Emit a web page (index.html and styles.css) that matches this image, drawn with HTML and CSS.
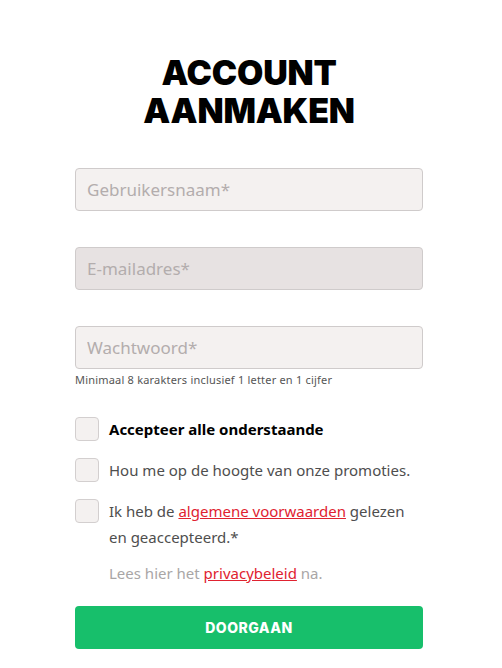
FILE: index.html
```html
<!DOCTYPE html>
<html lang="nl">
<head>
<meta charset="utf-8">
<title>Account aanmaken</title>
<link rel="stylesheet" href="styles.css">
</head>
<body>
<main class="page">
  <h1 class="title">ACCOUNT<br>AANMAKEN</h1>
  <form class="form">
    <div class="field">
      <input class="input" type="text" placeholder="Gebruikersnaam*">
    </div>
    <div class="field">
      <input class="input input-active" type="email" placeholder="E-mailadres*">
    </div>
    <div class="field field-last">
      <input class="input" type="password" placeholder="Wachtwoord*">
      <p class="hint">Minimaal 8 karakters inclusief 1 letter en 1 cijfer</p>
    </div>
    <div class="checks">
      <label class="check">
        <span class="box"></span>
        <span class="check-text strong">Accepteer alle onderstaande</span>
      </label>
      <label class="check">
        <span class="box"></span>
        <span class="check-text">Hou me op de hoogte van onze promoties.</span>
      </label>
      <label class="check">
        <span class="box"></span>
        <span class="check-text">Ik heb de <a class="link" href="#">algemene voorwaarden</a> gelezen<br>en geaccepteerd.*</span>
      </label>
      <p class="privacy">Lees hier het <a class="link" href="#">privacybeleid</a> na.</p>
    </div>
    <button class="submit" type="button">DOORGAAN</button>
  </form>
</main>
</body>
</html>
```
FILE: styles.css
```css
html, body {
  margin: 0;
  padding: 0;
  background: #ffffff;
}
body {
  font-family: "Noto Sans", "DejaVu Sans", sans-serif;
  color: #4a4a4a;
}
.page {
  width: 348px;
  margin-left: 75px;
  padding-top: 54px;
}
.title {
  margin: 0;
  text-align: center;
  font-family: "Inter", "DejaVu Sans", sans-serif;
  font-weight: 900;
  font-size: 34px;
  line-height: 38px;
  letter-spacing: -0.2px;
  color: #000;
}
.form {
  display: flex;
  flex-direction: column;
  margin-top: 38px;
}
.field {
  margin-bottom: 36px;
}
.field-last {
  margin-bottom: 0;
}
.input {
  display: block;
  box-sizing: border-box;
  width: 100%;
  height: 43px;
  padding: 0 11px;
  border: 1px solid #cfcbcb;
  border-radius: 4px;
  background: #f4f1f0;
  font-family: inherit;
  font-size: 17px;
  color: #333;
  outline: none;
}
.input-active {
  background: #e7e2e2;
}
.input::placeholder {
  color: #b3adad;
}
.hint {
  margin: 4px 0 0;
  font-size: 11px;
  line-height: 13px;
  letter-spacing: 0.2px;
  color: #555;
}
.checks {
  display: flex;
  flex-direction: column;
  gap: 16px;
  margin-top: 31px;
}
.check {
  display: flex;
  align-items: flex-start;
  gap: 10px;
}
.box {
  flex: none;
  box-sizing: border-box;
  width: 24px;
  height: 24px;
  border: 1px solid #d3cfcf;
  border-radius: 4px;
  background: #f4f1f0;
}
.check-text {
  display: block;
  font-size: 15px;
  line-height: 26px;
  margin-top: -1px;
  color: #4e4e4e;
}
.strong {
  font-weight: 700;
  color: #000;
}
.link {
  color: #e02230;
  text-decoration: underline;
}
.privacy {
  margin: -6px 0 0 34px;
  font-size: 15px;
  line-height: 26px;
  color: #a9a6a6;
}
.submit {
  margin-top: 20px;
  height: 43px;
  border: none;
  border-radius: 4px;
  background: #17bf6b;
  color: #fff;
  font-family: "Inter", "DejaVu Sans", sans-serif;
  font-weight: 800;
  font-size: 14px;
  letter-spacing: 0.5px;
}
```
